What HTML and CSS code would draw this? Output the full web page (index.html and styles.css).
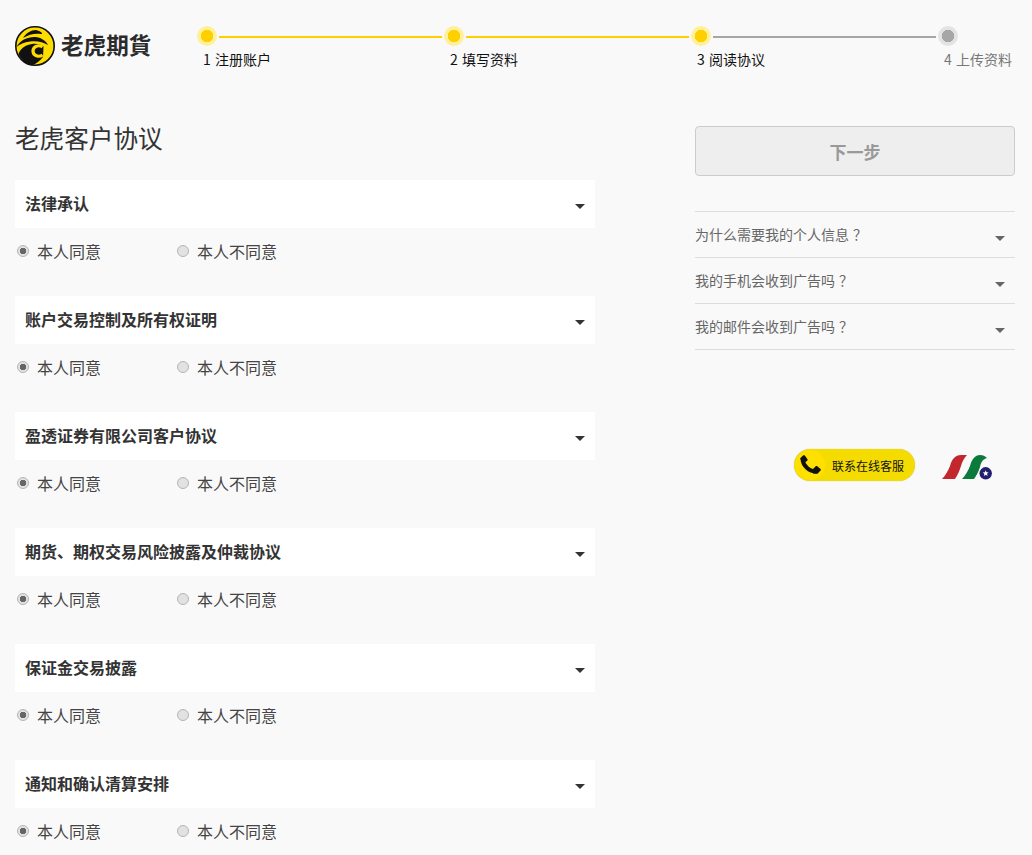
FILE: index.html
```html
<!DOCTYPE html>
<html lang="zh-CN">
<head>
<meta charset="UTF-8">
<meta name="viewport" content="width=device-width, initial-scale=1.0">
<title>老虎客户协议</title>
<link rel="stylesheet" href="styles.css">
</head>
<body>
<header class="top">
  <div class="logo">
    <svg class="logo-mark" viewBox="0 0 40 40" width="40" height="40">
      <circle cx="20" cy="20" r="19.200" fill="#ffdc00" stroke="#111" stroke-width="1.600"/>
      <path d="M8 12 C11 7 16 4 21 4 L24 5 C27 6 28 8 26 8 C21 7 14 8 8 12 Z" fill="#111"/>
      <path d="M1.500 21 C5 14 13 10.500 21 11 C27 12 31 15 33 19 C28 15.500 21 14.500 15 15.500 C9 16.500 5 18 1.500 21 Z" fill="#111"/>
      <path d="M3.500 28 C5 23 10 19 17 18 C22 17.500 26 18.500 28.500 20.500 L28 31 C25 35 21 37.500 18 39 C11 38 6 34 3.500 28 Z" fill="#111"/>
      <path d="M27.500 21 C24 18.500 18 20 18 25 C18 30 24 31.500 27.500 29" fill="none" stroke="#ffdc00" stroke-width="3.200"/>
    </svg>
    <span class="logo-text">老虎期貨</span>
  </div>
  <ol class="steps">
    <li class="step done"><span class="dot"></span><span class="bar"></span><span class="step-label">1 注册账户</span></li>
    <li class="step done"><span class="dot"></span><span class="bar"></span><span class="step-label">2 填写资料</span></li>
    <li class="step done grey-bar"><span class="dot"></span><span class="bar"></span><span class="step-label">3 阅读协议</span></li>
    <li class="step last"><span class="dot"></span><span class="step-label">4 上传资料</span></li>
  </ol>
</header>

<main class="content">
  <section class="agreements">
    <h1 class="page-title">老虎客户协议</h1>

    <div class="agreement">
      <div class="agreement-head">法律承认<i class="caret"></i></div>
      <div class="choices">
        <label class="choice"><input type="radio" name="a1" checked>本人同意</label>
        <label class="choice"><input type="radio" name="a1">本人不同意</label>
      </div>
    </div>
    <div class="agreement">
      <div class="agreement-head">账户交易控制及所有权证明<i class="caret"></i></div>
      <div class="choices">
        <label class="choice"><input type="radio" name="a2" checked>本人同意</label>
        <label class="choice"><input type="radio" name="a2">本人不同意</label>
      </div>
    </div>
    <div class="agreement">
      <div class="agreement-head">盈透证券有限公司客户协议<i class="caret"></i></div>
      <div class="choices">
        <label class="choice"><input type="radio" name="a3" checked>本人同意</label>
        <label class="choice"><input type="radio" name="a3">本人不同意</label>
      </div>
    </div>
    <div class="agreement">
      <div class="agreement-head">期货、期权交易风险披露及仲裁协议<i class="caret"></i></div>
      <div class="choices">
        <label class="choice"><input type="radio" name="a4" checked>本人同意</label>
        <label class="choice"><input type="radio" name="a4">本人不同意</label>
      </div>
    </div>
    <div class="agreement">
      <div class="agreement-head">保证金交易披露<i class="caret"></i></div>
      <div class="choices">
        <label class="choice"><input type="radio" name="a5" checked>本人同意</label>
        <label class="choice"><input type="radio" name="a5">本人不同意</label>
      </div>
    </div>
    <div class="agreement">
      <div class="agreement-head">通知和确认清算安排<i class="caret"></i></div>
      <div class="choices">
        <label class="choice"><input type="radio" name="a6" checked>本人同意</label>
        <label class="choice"><input type="radio" name="a6">本人不同意</label>
      </div>
    </div>
  </section>

  <aside class="side">
    <button class="next-btn" disabled>下一步</button>
    <ul class="faq">
      <li class="faq-item">为什么需要我的个人信息<span class="qm">？</span><i class="caret"></i></li>
      <li class="faq-item">我的手机会收到广告吗<span class="qm">？</span><i class="caret"></i></li>
      <li class="faq-item">我的邮件会收到广告吗<span class="qm">？</span><i class="caret"></i></li>
    </ul>
    <div class="support">
      <a class="chat-btn">
        <span class="chat-icon">
          <svg viewBox="0 0 22 20" width="22" height="20">
            <path d="M3.500 4 C4 10.500 10 16.500 17.500 16.500" fill="none" stroke="#111" stroke-width="4"/>
            <path d="M1 3.500 L4 0.500 C4.600 0 5.400 0 5.800 0.600 L8.500 4.200 C8.800 4.800 8.700 5.400 8.200 5.800 L4.500 8.500 Z" fill="#111"/>
            <path d="M14 14 L16.500 11.500 C17 11 17.600 10.900 18.200 11.300 L21.300 13.800 C21.900 14.300 22 15 21.500 15.600 L18.500 18.800 L14 18.500 Z" fill="#111"/>
          </svg>
        </span>
        联系在线客服
      </a>
      <svg class="partner-logo" viewBox="0 0 50 28" width="50" height="28">
        <path d="M0 26 C3 23 6 18 8 13 C10 6 13 2 19 2 L25 2 C22 5 20 9 19 13 C17 19 15 23 13 26 Z" fill="#c1272d"/>
        <path d="M20 26 C23 23 26 18 28 13 C30 6 33 2 38 2 C41 2 43 3 45 5 C41 6 39 9 38 14 C36 20 34 23 32 26 Z" fill="#0b7a3b"/>
        <circle cx="43.700" cy="20.300" r="6.200" fill="#231f6e"/>
        <path d="M43.700 17.300 L44.500 19.300 L46.700 19.400 L45 20.800 L45.600 22.900 L43.700 21.700 L41.800 22.900 L42.400 20.800 L40.700 19.400 L42.900 19.300 Z" fill="#fff"/>
      </svg>
    </div>
  </aside>
</main>
</body>
</html>
```

FILE: styles.css
```css
* {
  box-sizing: border-box;
}

body {
  margin: 0;
  background-color: #f9f9f9;
  color: #333;
  font-family: "Noto Sans CJK SC", "Liberation Sans", sans-serif;
  font-size: 14px;
}

.top {
  display: flex;
  padding: 26px 15px 0;
  height: 126px;
}

.logo {
  display: flex;
  align-items: flex-start;
  width: 182px;
}

.logo-mark {
  flex: none;
}

.logo-text {
  margin-left: 6px;
  font-size: 22.600px;
  font-weight: 700;
  line-height: 37px;
  color: #2b2b2b;
}

.steps {
  display: flex;
  margin: 0;
  padding: 0;
  list-style: none;
  width: 815px;
}

.step {
  position: relative;
  width: 247px;
  height: 50px;
  color: #111;
}

.step.last {
  width: 74px;
  color: #777;
}

.dot {
  display: block;
  width: 20px;
  height: 20px;
  border-radius: 50%;
  background: radial-gradient(circle, #ffcf00 0 6px, #fff09a 6.500px);
}

.step.last .dot {
  background: radial-gradient(circle, #a6a6a6 0 6px, #e3e3e3 6.500px);
}

.bar {
  position: absolute;
  top: 10px;
  left: 22px;
  width: 223px;
  height: 2px;
  background-color: #ffcf00;
}

.grey-bar .bar {
  background-color: #a6a6a6;
}

.step-label {
  display: block;
  margin: 3px 0 0 6px;
  line-height: 20px;
  word-spacing: 1px;
  white-space: nowrap;
}

.content {
  display: flex;
  justify-content: space-between;
  padding: 0 17px 0 15px;
}

.agreements {
  width: 580px;
}

.page-title {
  margin: 0 0 32px;
  font-size: 24.600px;
  font-weight: 400;
  line-height: 22px;
  color: #333;
}

.agreement {
  height: 116px;
}

.agreement-head {
  position: relative;
  height: 48px;
  padding-left: 10px;
  background-color: #fff;
  font-size: 16px;
  font-weight: 700;
  line-height: 46px;
  color: #333;
}

.agreement-head .caret {
  top: 24px;
  right: 10px;
}

.caret {
  position: absolute;
  width: 0;
  height: 0;
  border-top: 5px solid #333;
  border-left: 5px solid transparent;
  border-right: 5px solid transparent;
}

.choices {
  display: flex;
  padding: 11px 0 0 2px;
}

.choice {
  display: flex;
  align-items: center;
  width: 160px;
  font-size: 16px;
  line-height: 24px;
  color: #444;
}

.choice input {
  appearance: none;
  width: 12px;
  height: 12px;
  margin: 0 8px 0 0;
  border: 1px solid #b5b5b5;
  border-radius: 50%;
  background-color: #e2e2e2;
}

.choice input:checked {
  background: radial-gradient(circle, #666 0 3px, #e2e2e2 3.500px);
}

.side {
  width: 320px;
}

.next-btn {
  display: block;
  width: 100%;
  height: 50px;
  border: 1px solid #ccc;
  border-radius: 4px;
  background-color: #eee;
  color: #999;
  font-family: inherit;
  font-size: 17px;
  font-weight: 700;
}

.faq {
  margin: 35px 0 0;
  padding: 0;
  list-style: none;
  border-top: 1px solid #ddd;
}

.faq-item {
  position: relative;
  height: 46px;
  border-bottom: 1px solid #ddd;
  line-height: 45px;
  color: #666;
}

.faq-item .qm {
  margin-left: 4px;
}

.faq-item .caret {
  top: 24px;
  right: 10px;
  border-top-color: #666;
}

.support {
  display: flex;
  align-items: flex-start;
  margin: 99px 0 0 99px;
}

.chat-btn {
  display: flex;
  align-items: center;
  width: 121px;
  height: 32px;
  border-radius: 16px;
  background-color: #f5dc00;
  box-shadow: 0 0 1px #bbb;
  font-size: 12px;
  color: #111;
}

.chat-icon {
  display: flex;
  align-items: center;
  justify-content: center;
  width: 30px;
  height: 30px;
  margin: 0 7px 0 1px;
  border-radius: 50%;
  background-color: #ffe000;
}

.partner-logo {
  margin: 4px 0 0 27px;
}
```
